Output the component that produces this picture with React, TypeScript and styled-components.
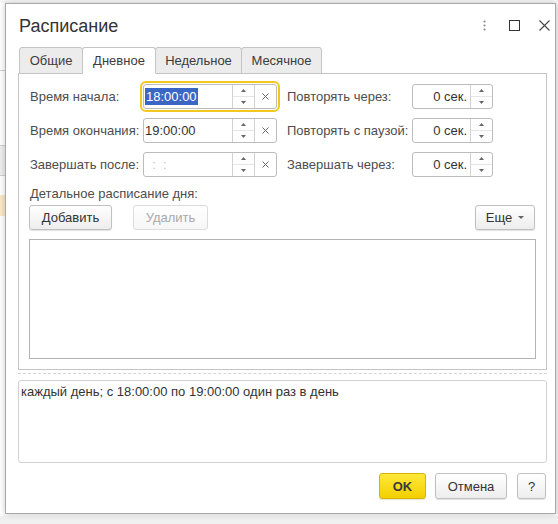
import React from 'react';
import styled, { createGlobalStyle, css } from 'styled-components';

const Global = createGlobalStyle`
  html, body { margin: 0; padding: 0; }
  body {
    width: 558px; height: 524px; overflow: hidden;
    background: #f4f4f4;
    font-family: "Liberation Sans", Arial, sans-serif;
    color: #333;
  }
  * { box-sizing: border-box; }
`;

const Page = styled.div`
  display: flex; flex-direction: column;
  width: 558px; height: 524px;
`;
const TopGap = styled.div`height: 3px; background: #f7f7f7;`;
const Middle = styled.div`display: flex; height: 511px;`;
const Backdrop = styled.div`
  width: 5px; display: flex; flex-direction: column; background: #fff;
`;
const Stripe = styled.div<{ $h: number; $bg: string; $mt: number; $line?: boolean }>`
  margin-top: ${p => p.$mt}px; height: ${p => p.$h}px; background: ${p => p.$bg};
  ${p => p.$line && css`border-top: 1px solid #d0d0d0; border-bottom: 1px solid #d0d0d0;`}
`;
const BottomBand = styled.div`flex: 1; background: #f0f0f0; border-top: 2px solid #fafafa;`;

const Dialog = styled.div`
  width: 551px; height: 511px;
  background: #fff;
  border: 1px solid #a9a9a9;
  box-shadow: 0 0 6px rgba(0,0,0,0.22);
  display: flex; flex-direction: column;
  position: relative; z-index: 1;
`;

const Header = styled.div`
  height: 43px; display: flex; align-items: center;
  padding: 0 5px 0 13px;
`;
const Title = styled.div`
  font-size: 18px; color: #333; flex: 1; padding-top: 1px;
`;
const HeaderIcons = styled.div`display: flex; align-items: center; gap: 18px;`;
const IconBtn = styled.div`width: 12px; height: 12px; display: flex; align-items: center; justify-content: center;`;

const Body = styled.div`
  flex: 1; display: flex; flex-direction: column;
  padding: 0 8px 13px 12px;
`;

const Tabs = styled.div`display: flex; height: 27px; padding-left: 1px; margin-bottom: -1px; position: relative; z-index: 2;`;
const Tab = styled.div<{ $active?: boolean; $w: number }>`
  width: ${p => p.$w}px; height: 27px;
  display: flex; align-items: center; justify-content: center;
  font-size: 13px; color: #3c3c3c;
  border: 1px solid #c4c4c4;
  border-radius: 3px 3px 0 0;
  margin-right: -1px;
  background: ${p => (p.$active ? '#fff' : '#ececec')};
  ${p => p.$active && css`border-bottom-color: #fff; position: relative; z-index: 1;`}
`;

const Panel = styled.div`
  height: 297px; border: 1px solid #c4c4c4;
  padding: 10px 10px 10px 10px;
  display: flex; flex-direction: column;
`;

const FormGrid = styled.div`
  display: grid;
  grid-template-columns: 114px 134px 9px 126px 81px;
  grid-auto-rows: 25px;
  row-gap: 9px;
  align-items: center;
`;
const Label = styled.div`font-size: 13px; color: #4d4d4d; padding-left: 1px; white-space: nowrap;`;
const Gap = styled.div``;

const Field = styled.div<{ $focused?: boolean }>`
  height: 25px; display: flex;
  border: 1px solid #bcbcbc; border-radius: 3px;
  background: #fff;
  ${p => p.$focused && css`outline: 2px solid #f2c81e; outline-offset: 1px;`}
`;
const FieldText = styled.div<{ $right?: boolean; $muted?: boolean }>`
  flex: 1; display: flex; align-items: center;
  justify-content: ${p => (p.$right ? 'flex-end' : 'flex-start')};
  padding: 0 ${p => (p.$right ? '3px' : '1px')};
  font-size: 13px; color: ${p => (p.$muted ? '#c4c4c4' : '#333')};
  white-space: pre;
`;
const Selected = styled.span`background: #3a67c6; color: #fff; padding: 1px 1px;`;
const Spin = styled.div`
  width: 22px; border-left: 1px solid #d2d2d2;
  display: flex; flex-direction: column;
`;
const SpinHalf = styled.div<{ $top?: boolean }>`
  flex: 1; display: flex; align-items: center; justify-content: center;
  ${p => p.$top && css`border-bottom: 1px solid #e6e6e6;`}
`;
const Clear = styled.div`
  width: 22px; border-left: 1px solid #d2d2d2;
  display: flex; align-items: center; justify-content: center;
`;

const Caption = styled.div`font-size: 13px; color: #4d4d4d; margin-top: 9px; height: 15px; line-height: 15px; padding-left: 1px;`;
const CmdBar = styled.div`display: flex; align-items: center; margin-top: 4px; height: 25px;`;
const Spacer = styled.div`flex: 1;`;

const Button = styled.div<{ $w: number; $disabled?: boolean; $primary?: boolean; $ml?: number; $h?: number }>`
  width: ${p => p.$w}px; height: ${p => p.$h ?? 25}px;
  margin-left: ${p => p.$ml ?? 0}px;
  display: flex; align-items: center; justify-content: center; gap: 6px;
  font-size: 13px;
  border: 1px solid #c0c0c0; border-radius: 3px;
  background: linear-gradient(#ffffff, #ededed);
  box-shadow: 0 1px 1px rgba(0,0,0,0.12);
  color: #333;
  ${p => p.$disabled && css`color: #a9a9a9; border-color: #dcdcdc; background: linear-gradient(#fff, #f6f6f6); box-shadow: none;`}
  ${p => p.$primary && css`
    background: linear-gradient(#ffe83a, #f3cf00);
    border-color: #d7b400;
    font-weight: bold; color: #3a3a3a;
  `}
`;

const List = styled.div`
  margin-top: 9px; height: 120px;
  border: 1px solid #b3b3b3;
  background: #fff;
`;

const Dashed = styled.div`margin-top: 3px; border-top: 1px dashed #d4d4d4; height: 1px;`;
const Summary = styled.div`
  margin-top: 6px; height: 83px;
  border: 1px solid #d2d2d2; border-radius: 3px;
  padding: 3px 2px; font-size: 13px; color: #333;
`;
const Footer = styled.div`
  margin-top: 10px; display: flex; justify-content: flex-end; padding-right: 1px;
`;

const Up = () => (
  <svg width="5" height="3" viewBox="0 0 5 3"><path d="M2.5 0 L5 3 L0 3 Z" fill="#666" /></svg>
);
const Down = () => (
  <svg width="5" height="3" viewBox="0 0 5 3"><path d="M0 0 L5 0 L2.5 3 Z" fill="#666" /></svg>
);
const Cross = ({ s = 8, c = '#555', w = 1.2 }: { s?: number; c?: string; w?: number }) => (
  <svg width={s} height={s} viewBox={`0 0 ${s} ${s}`}>
    <path d={`M0.5 0.5 L${s - 0.5} ${s - 0.5} M${s - 0.5} 0.5 L0.5 ${s - 0.5}`} stroke={c} strokeWidth={w} />
  </svg>
);

const SpinBox = () => (
  <Spin>
    <SpinHalf $top><Up /></SpinHalf>
    <SpinHalf><Down /></SpinHalf>
  </Spin>
);

const TimeField = ({ children, focused, muted }: { children: React.ReactNode; focused?: boolean; muted?: boolean }) => (
  <Field $focused={focused}>
    <FieldText $muted={muted}>{children}</FieldText>
    <SpinBox />
    <Clear><Cross s={7} c="#666" w={1} /></Clear>
  </Field>
);

const SecField = () => (
  <Field>
    <FieldText $right>0 сек.</FieldText>
    <SpinBox />
  </Field>
);

export default function App() {
  return (
    <Page>
      <Global />
      <TopGap />
      <Middle>
        <Backdrop>
          <Stripe $mt={67} $h={1} $bg="#cfcfcf" />
          <Stripe $mt={74} $h={31} $bg="#eeeeee" $line />
          <Stripe $mt={19} $h={21} $bg="#fbe8c8" />
        </Backdrop>
        <Dialog>
          <Header>
            <Title>Расписание</Title>
            <HeaderIcons>
              <IconBtn>
                <svg width="3" height="11" viewBox="0 0 3 11">
                  <circle cx="1.5" cy="1.5" r="1.1" fill="#8a8a8a" />
                  <circle cx="1.5" cy="5.5" r="1.1" fill="#8a8a8a" />
                  <circle cx="1.5" cy="9.5" r="1.1" fill="#8a8a8a" />
                </svg>
              </IconBtn>
              <IconBtn>
                <svg width="11" height="11" viewBox="0 0 11 11">
                  <rect x="0.5" y="0.5" width="10" height="10" fill="none" stroke="#333" strokeWidth="1" />
                </svg>
              </IconBtn>
              <IconBtn>
                <Cross s={11} c="#444" w={1.1} />
              </IconBtn>
            </HeaderIcons>
          </Header>
          <Body>
            <Tabs>
              <Tab $w={64}>Общие</Tab>
              <Tab $w={74} $active>Дневное</Tab>
              <Tab $w={87}>Недельное</Tab>
              <Tab $w={81}>Месячное</Tab>
            </Tabs>
            <Panel>
              <FormGrid>
                <Label>Время начала:</Label>
                <TimeField focused><Selected>18:00:00</Selected></TimeField>
                <Gap />
                <Label>Повторять через:</Label>
                <SecField />

                <Label>Время окончания:</Label>
                <TimeField>19:00:00</TimeField>
                <Gap />
                <Label>Повторять с паузой:</Label>
                <SecField />

                <Label>Завершать после:</Label>
                <TimeField muted>{'  :  :'}</TimeField>
                <Gap />
                <Label>Завершать через:</Label>
                <SecField />
              </FormGrid>
              <Caption>Детальное расписание дня:</Caption>
              <CmdBar>
                <Button $w={83}>Добавить</Button>
                <Button $w={75} $ml={21} $disabled>Удалить</Button>
                <Spacer />
                <Button $w={60} $ml={0} style={{ marginRight: 1 }}>
                  Еще
                  <svg width="6" height="3" viewBox="0 0 6 3"><path d="M0 0 L6 0 L3 3 Z" fill="#666" /></svg>
                </Button>
              </CmdBar>
              <List />
            </Panel>
            <Dashed />
            <Summary>каждый день; с 18:00:00 по 19:00:00 один раз в день</Summary>
            <Footer>
              <Button $w={47} $h={26} $primary>OK</Button>
              <Button $w={72} $h={26} $ml={9}>Отмена</Button>
              <Button $w={29} $h={26} $ml={10}>?</Button>
            </Footer>
          </Body>
        </Dialog>
        <Spacer />
      </Middle>
      <BottomBand />
    </Page>
  );
}
